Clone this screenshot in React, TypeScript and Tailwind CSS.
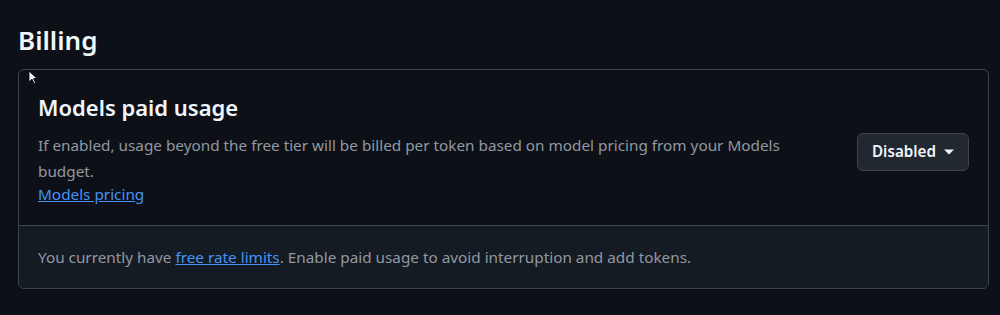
export default function App() {
  return (
    <div
      className="relative h-[315px] w-[1000px] overflow-hidden bg-[#0d1117] px-[18px] pt-[24px] text-[#f0f6fc]"
      style={{ fontFamily: '"Noto Sans", "Open Sans", sans-serif' }}
    >
      <h2 className="text-[26px] font-semibold leading-[32px]">Billing</h2>
      <div className="mt-[13px] w-[971px] overflow-hidden rounded-md border border-[#3d444d]">
        <div className="flex items-center justify-between pb-[20px] pl-[19px] pr-[19px] pt-[22px]">
          <div className="max-w-[790px]">
            <h3 className="text-[22px] font-semibold leading-[30px]">Models paid usage</h3>
            <p className="mt-[10px] text-[15.3px] leading-[26px] text-[#9198a1]">
              If enabled, usage beyond the free tier will be billed per token based on model pricing from your Models budget.
            </p>
            <a href="#" className="block text-[15.3px] leading-[21px] text-[#4493f8] underline">
              Models pricing
            </a>
          </div>
          <button className="mt-[6px] flex h-[38px] items-center gap-[8px] rounded-md border border-[#3d444d] bg-[#212830] pl-[14px] pr-[14px] text-[15.2px] font-semibold text-[#f0f6fc]">
            Disabled
            <svg width="10" height="6" viewBox="0 0 10 6" className="mt-[1px]">
              <path d="M0 0.5h10L5 5.5z" fill="#f0f6fc" />
            </svg>
          </button>
        </div>
        <div className="border-t border-[#3d444d] bg-[#151b23] px-[19px] py-[18px] text-[15.3px] leading-[26px] text-[#9198a1]">
          You currently have{' '}
          <a href="#" className="text-[#4493f8] underline">
            free rate limits
          </a>
          . Enable paid usage to avoid interruption and add tokens.
        </div>
      </div>
      <svg className="absolute left-[28px] top-[70px]" width="10" height="15" viewBox="0 0 10 15">
        <path d="M1 1v11l3-3 2 4.5 1.6-.7-2-4.3H9z" fill="#f0f6fc" stroke="#000" strokeWidth="0.8" />
      </svg>
    </div>
  )
}
